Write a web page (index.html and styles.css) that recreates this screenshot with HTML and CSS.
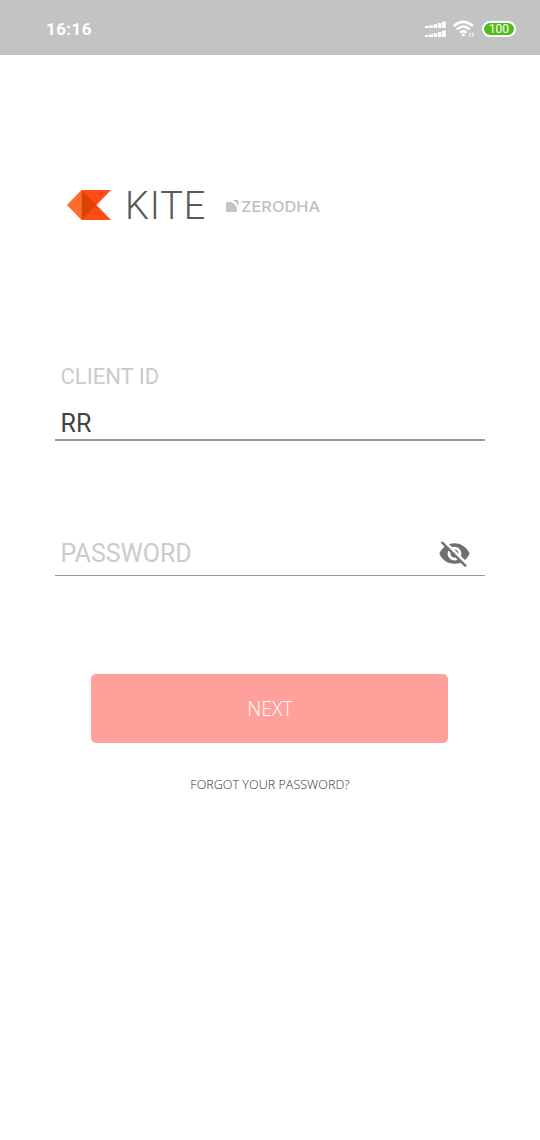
FILE: index.html
```html
<!DOCTYPE html>
<html lang="en">
<head>
<meta charset="utf-8">
<title>Kite</title>
<link rel="stylesheet" href="styles.css">
</head>
<body>
<header class="status">
  <span class="clock">16:16</span>
  <div class="indicators">
    <svg class="signal" width="21" height="17" viewBox="0 0 21 17" fill="#fff">
      <path d="M0 5h3.6v2H0zM4.3 4.2h3.6V7H4.3zM8.6 3.2h3.6V7H8.6zM12.9 1.9h3.6V7h-3.6zM17.2 .5h3.6V7h-3.6zM0 14h3.6v2H0zM4.3 13.2h3.6V16H4.3zM8.6 12.2h3.6V16H8.6zM12.9 10.9h3.6V16h-3.6zM17.2 9.5h3.6V16h-3.6z"/>
    </svg>
    <svg class="wifi" width="22" height="18" viewBox="0 0 22 18" fill="none" stroke="#fff" stroke-width="2.5">
      <path d="M.8 6.1Q10 -2.4 20 6.1M3.9 9.4Q10.3 3.6 16.8 9.4M7 12.6Q10.3 9.8 13.6 12.6"/>
      <circle cx="10.3" cy="14.8" r="1.6" fill="#fff" stroke="none"/>
      <path d="M17 13v4M19.8 12.5v4" stroke-width="1"/>
    </svg>
    <span class="battery">100</span>
  </div>
</header>
<main class="login">
  <div class="brand">
    <svg class="kite" width="44" height="30" viewBox="0 0 44 30">
      <path fill="#fc4b16" d="M14.5 0H44L29.5 15 44 30H14.5z"/>
      <path fill="#ff6b2c" d="M14.5 0v30L0 15z"/>
      <path fill="#dc4302" d="M14.5 0l15 15-15 15z"/>
    </svg>
    <span class="name">KITE</span>
    <svg class="mark" width="13" height="12" viewBox="0 0 13 12" fill="#c4c4c4">
      <path d="M0 3.5Q0 2 1.5 2H5Q10.5 4 11 9V12H0zM6.5 0H12.5V6.5Q11 2 6.5 0z"/>
    </svg>
    <span class="company">ZERODHA</span>
  </div>
  <form class="form">
    <label class="field client">
      <span class="label">CLIENT ID</span>
      <span class="value">RR</span>
    </label>
    <label class="field password">
      <span class="hint">PASSWORD</span>
      <svg class="eye" width="33" height="33" viewBox="0 0 24 24" fill="#707070">
        <path d="M12 7c2.76 0 5 2.24 5 5 0 .65-.13 1.26-.36 1.83l2.92 2.92c1.51-1.26 2.7-2.89 3.43-4.75-1.73-4.39-6-7.5-11-7.5-1.4 0-2.74.25-3.98.7l2.16 2.16C10.74 7.13 11.35 7 12 7zM2 4.27l2.28 2.28.46.46C3.08 8.3 1.78 10.02 1 12c1.73 4.39 6 7.5 11 7.5 1.55 0 3.03-.3 4.38-.84l.42.42L19.73 22 21 20.73 3.27 3 2 4.27zM7.53 9.8l1.55 1.55c-.05.21-.08.43-.08.65 0 1.66 1.34 3 3 3 .22 0 .44-.03.65-.08l1.55 1.55c-.67.33-1.41.53-2.2.53-2.76 0-5-2.24-5-5 0-.79.2-1.53.53-2.2zm4.31-.78l3.15 3.15.02-.16c0-1.66-1.34-3-3-3l-.17.01z"/>
      </svg>
    </label>
    <button class="next" type="button">NEXT</button>
    <a class="forgot">FORGOT YOUR PASSWORD?</a>
  </form>
</main>
</body>
</html>
```
FILE: styles.css
```css
* { box-sizing: border-box; }
body { margin: 0; height: 1140px; background: #fff; font-family: Roboto, sans-serif; }
svg { display: block; flex: none; }
.status {
  height: 55px;
  padding: 3px 24px 0 46px;
  display: flex;
  align-items: center;
  justify-content: space-between;
  background: #c3c3c3;
  color: #fff;
}
.clock { font-size: 17px; font-weight: 700; letter-spacing: .4px; }
.indicators { display: flex; align-items: center; gap: 7px; }
.battery {
  width: 34px;
  height: 16px;
  border: 2px solid #fff;
  border-radius: 8px;
  background: #4fbd18;
  font-size: 12px;
  font-weight: 400;
  line-height: 13px;
  text-align: center;
}
.login { padding: 130px 55px 0; }
.brand { display: flex; align-items: center; height: 40px; padding-left: 12px; }
.name {
  width: 80px;
  margin: 2px 0 0 14px;
  font-size: 38px;
  font-weight: 300;
  line-height: 40px;
  letter-spacing: .8px;
  color: #58595b;
}
.mark { margin: 2px 0 0 21px; }
.company {
  margin: 3px 0 0 2px;
  font-family: Inter, sans-serif;
  font-size: 15px;
  font-weight: 500;
  line-height: 20px;
  transform: scaleX(1.09);
  transform-origin: left;
  color: #c0c0c0;
}
.form { display: flex; flex-direction: column; }
.field { display: flex; padding-left: 5.5px; }
.client { flex-direction: column; margin-top: 136px; height: 80px; padding-top: 1px; border-bottom: 2px solid #979797; }
.label { font-size: 22px; line-height: 30px; color: #cbcbcb; }
.value { margin-top: 17px; font-size: 25px; line-height: 30px; color: #424242; }
.password {
  align-items: center;
  justify-content: space-between;
  height: 46px;
  margin-top: 89px;
  padding-top: 2px;
  padding-right: 14px;
  border-bottom: 1px solid #979797;
}
.hint { font-size: 25px; line-height: 30px; color: #cbcbcb; }
.next {
  height: 69px;
  margin: 98px 37px 0 36px;
  padding: 0 0 0 1px;
  border: 0;
  border-radius: 5px;
  background: #ffa19a;
  color: #fff;
  font: 300 19.5px "Open Sans", sans-serif;
}
.forgot {
  align-self: center;
  margin-top: 33px;
  font: 300 12.6px/18px "Open Sans", sans-serif;
  color: #333;
}
```
